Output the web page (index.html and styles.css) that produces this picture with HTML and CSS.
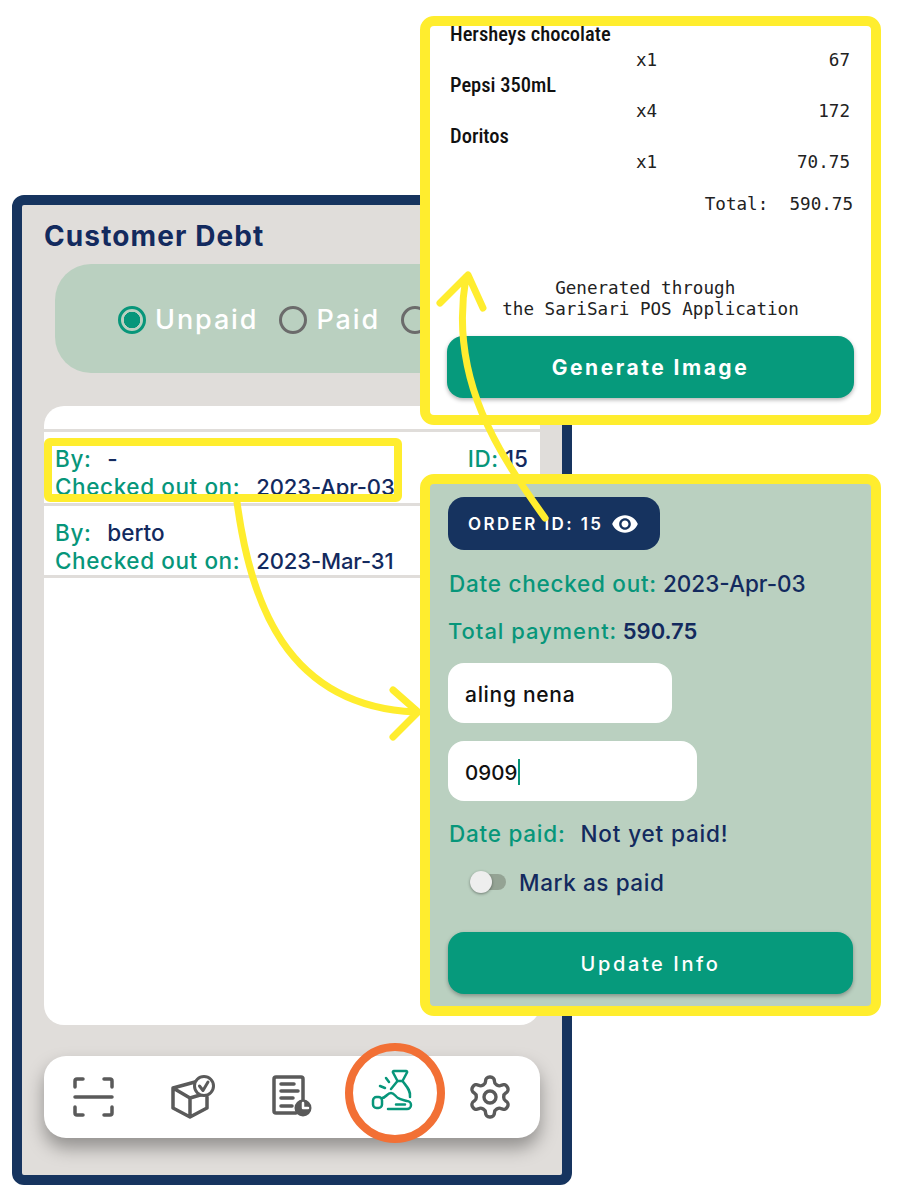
FILE: index.html
```html
<!DOCTYPE html>
<html>
<head>
  <title>Customer Debt</title>
  <link rel="stylesheet" href="styles.css">
</head>
<body>
  <div class="phone">
    <h1 class="title">Customer Debt</h1>
    <div class="filter">
      <span class="radio checked"></span><span class="radio-label">Unpaid</span>
      <span class="radio"></span><span class="radio-label">Paid</span>
      <span class="radio"></span>
    </div>
    <div class="orders">
      <div class="order">
        <div>
          <div><span class="key">By:</span><span class="val by">-</span></div>
          <div><span class="key">Checked out on:</span><span class="val date">2023-Apr-03</span></div>
        </div>
        <div><span class="key">ID:</span> <span class="val">15</span></div>
      </div>
      <div class="order">
        <div>
          <div><span class="key">By:</span><span class="val by">berto</span></div>
          <div><span class="key">Checked out on:</span><span class="val date">2023-Mar-31</span></div>
        </div>
      </div>
    </div>
    <div class="nav">
      <div class="nav-item">
        <svg class="icon" viewBox="0 0 48 48">
          <path d="M5 14V8a2 2 0 0 1 2-2h6M34 6h6a2 2 0 0 1 2 2v6M5 34v6a2 2 0 0 0 2 2h6M34 42h6a2 2 0 0 0 2-2v-6M5 24h37"/>
        </svg>
      </div>
      <div class="nav-item">
        <svg class="icon" viewBox="0 0 48 48">
          <path d="M26 9L4 15V35L21 44L38 35V24M4 15L21 25L38 20M21 25V44"/>
          <circle class="badge" cx="35" cy="13" r="9.5"/>
          <path class="thin" d="M30.5 13l3.5 4.5l5-8.5"/>
        </svg>
      </div>
      <div class="nav-item">
        <svg class="icon" viewBox="0 0 48 48">
          <path d="M28 40H8a2 2 0 0 1-2-2V6a2 2 0 0 1 2-2h25a2 2 0 0 1 2 2v21"/>
          <path d="M13 11h13M13 18h17M13 25h12M13 33h11"/>
          <circle class="solid" cx="35" cy="35" r="8.5"/>
          <path class="hand-clock" d="M35 30v5h5"/>
        </svg>
      </div>
      <div class="nav-item">
        <svg class="icon active" viewBox="0 0 48 48">
          <path d="M27 -2h12a1 1 0 0 1 1 1.5L35.500 8h-5L26 -.5a1 1 0 0 1 1-1.500z"/>
          <path d="M35.500 8C39 13 44 17 43 24M30.500 8L24 16M13 13L18 15M19 5L22 9"/>
          <path d="M15 25C19 25 20 20 24 20C27 20 28 23 31 25C34 27 37 27 40 28a4 4 0 0 1 0 8H21M29 31.500H38"/>
          <rect x="6" y="24" width="9" height="11" rx="3.500"/>
        </svg>
      </div>
      <div class="nav-item">
        <svg class="icon gear" viewBox="0 0 24 24">
          <path d="M12.22 2h-.44a2 2 0 0 0-2 2v.18a2 2 0 0 1-1 1.730l-.43.25a2 2 0 0 1-2 0l-.15-.08a2 2 0 0 0-2.730.73l-.22.38a2 2 0 0 0 .73 2.730l.15.1a2 2 0 0 1 1 1.720v.51a2 2 0 0 1-1 1.740l-.15.09a2 2 0 0 0-.73 2.730l.22.38a2 2 0 0 0 2.730.73l.15-.08a2 2 0 0 1 2 0l.43.25a2 2 0 0 1 1 1.730V20a2 2 0 0 0 2 2h.44a2 2 0 0 0 2-2v-.18a2 2 0 0 1 1-1.730l.43-.25a2 2 0 0 1 2 0l.15.08a2 2 0 0 0 2.730-.73l.22-.39a2 2 0 0 0-.73-2.730l-.15-.08a2 2 0 0 1-1-1.740v-.5a2 2 0 0 1 1-1.740l.15-.09a2 2 0 0 0 .73-2.730l-.22-.38a2 2 0 0 0-2.730-.73l-.15.08a2 2 0 0 1-2 0l-.43-.25a2 2 0 0 1-1-1.730V4a2 2 0 0 0-2-2z"/>
          <circle cx="12" cy="12" r="3"/>
        </svg>
      </div>
    </div>
  </div>

  <div class="panel receipt">
    <div class="items">
      <div class="item-name">Hersheys chocolate</div>
      <div class="item-row"><span>x1</span><span>67</span></div>
      <div class="item-name">Pepsi 350mL</div>
      <div class="item-row"><span>x4</span><span>172</span></div>
      <div class="item-name">Doritos</div>
      <div class="item-row"><span>x1</span><span>70.75</span></div>
    </div>
    <div class="total">Total:  590.75</div>
    <div class="generated">Generated through <br>the SariSari POS Application</div>
    <div class="btn">Generate Image</div>
  </div>

  <div class="panel details">
    <div class="order-badge">
      <span>ORDER ID: 15</span>
      <svg class="eye" viewBox="0 0 24 24">
        <path d="M12 4.500C7 4.500 2.730 7.610 1 12c1.730 4.390 6 7.500 11 7.500s9.270-3.110 11-7.500c-1.730-4.390-6-7.500-11-7.500zM12 17c-2.760 0-5-2.240-5-5s2.240-5 5-5 5 2.240 5 5-2.240 5-5 5zm0-8c-1.660 0-3 1.340-3 3s1.340 3 3 3 3-1.340 3-3-1.340-3-3-3z"/>
      </svg>
    </div>
    <div class="line first"><span class="key">Date checked out:</span> <span class="val">2023-Apr-03</span></div>
    <div class="line total-line"><span class="key">Total payment:</span> <span class="val">590.75</span></div>
    <div class="field name-field">aling nena</div>
    <div class="field phone-field">0909<span class="caret"></span></div>
    <div class="line paid-line"><span class="key">Date paid:</span><span class="val not-paid">Not yet paid!</span></div>
    <div class="toggle-row">
      <span class="toggle"><span class="thumb"></span></span>
      <span class="val mark-label">Mark as paid</span>
    </div>
    <div class="btn update">Update Info</div>
  </div>

  <svg class="overlay" viewBox="0 0 900 1200">
    <rect class="mark" x="48" y="442" width="350" height="56" rx="2"/>
    <path class="mark" d="M237 502C250 600 285 706 415 712M393 690L418 712L393 737"/>
    <path class="mark" d="M545 518C500 455 448 380 466 277M440 303L468 275L483 308"/>
    <circle class="ring" cx="395" cy="1093" r="46"/>
  </svg>
</body>
</html>
```

FILE: styles.css
```css
* {
  box-sizing: border-box;
  margin: 0;
  padding: 0;
}

body {
  position: relative;
  width: 900px;
  height: 1200px;
  overflow: hidden;
  background: #fff;
  font-family: Inter, "Noto Sans", sans-serif;
  color: #132a5e;
}

.key {
  color: #07967a;
  letter-spacing: 0.75px;
}

.val {
  color: #132a5e;
}

/* phone */
.phone {
  width: 560px;
  height: 990px;
  margin: 195px 0 0 12px;
  padding: 15px 22px 0;
  background: #e0ddda;
  border: 10px solid #16345f;
  border-radius: 12px;
}

.title {
  font-size: 28px;
  line-height: 32px;
  font-weight: 700;
  letter-spacing: 1.100px;
  color: #132a5e;
}

.filter {
  display: flex;
  align-items: center;
  width: 475px;
  height: 109px;
  margin: 12px 0 0 11px;
  padding: 2px 0 0 63px;
  background: #bad0c0;
  border-radius: 36px;
}

.radio {
  flex: none;
  width: 28px;
  height: 28px;
  border: 3px solid #6b6b6b;
  border-radius: 50%;
}

.radio.checked {
  border-color: #07967a;
  background: radial-gradient(circle, #07967a 0 8px, transparent 8.500px);
}

.radio-label {
  margin: 0 21px 0 9px;
  font-size: 27px;
  font-weight: 500;
  letter-spacing: 1.900px;
  color: #fff;
}

.orders {
  width: 496px;
  height: 619px;
  margin-top: 33px;
  padding-top: 23px;
  background: #fff;
  border-radius: 20px;
}

.order {
  display: flex;
  justify-content: space-between;
  height: 74px;
  padding: 13px 12px 0 11px;
  border-top: 3px solid #e0ddda;
  font-size: 22.500px;
  line-height: 28px;
  font-weight: 500;
}

.order .key {
  letter-spacing: 0.600px;
}

.order + .order {
  height: 75px;
  border-bottom: 3px solid #e0ddda;
}

.by {
  margin-left: 16px;
}

.date {
  margin-left: 16px;
  font-size: 22px;
  letter-spacing: -0.100px;
}

.nav {
  display: grid;
  grid-template-columns: repeat(5, 1fr);
  align-items: center;
  width: 496px;
  height: 82px;
  margin-top: 31px;
  background: #fff;
  border-radius: 22px;
  box-shadow: 0 10px 18px rgba(0, 0, 0, 0.35);
}

.nav-item {
  display: flex;
  justify-content: center;
}

.icon {
  width: 48px;
  height: 48px;
  overflow: visible;
  fill: none;
  stroke: #5a5a5a;
  stroke-width: 3.500;
  stroke-linecap: round;
  stroke-linejoin: round;
}

.icon.active {
  stroke: #07967a;
  stroke-width: 2.500;
}

.icon.gear {
  stroke-width: 1.700;
}

.icon .badge {
  fill: #fff;
  stroke-width: 3;
}

.icon .thin {
  stroke-width: 3;
}

.icon .solid {
  fill: #5a5a5a;
  stroke: none;
}

.icon .hand-clock {
  stroke: #fff;
  stroke-width: 2.500;
}

/* floating panels */
.panel {
  position: absolute;
  left: 420px;
  width: 461px;
  overflow: hidden;
  border: 10px solid #ffed2e;
  border-radius: 14px;
}

.receipt {
  top: 16px;
  height: 409px;
  background: #fff;
  padding: 0 17px;
  color: #111;
}

.items {
  margin-top: -4px;
  padding-left: 3px;
}

.item-name {
  font-family: Roboto, sans-serif;
  font-size: 20.500px;
  font-weight: 500;
  line-height: 25.500px;
  font-stretch: 75%;
}

.item-row {
  display: flex;
  justify-content: space-between;
  padding: 0 4px 0 186px;
  font-family: "DejaVu Sans Mono", monospace;
  font-size: 17.600px;
  line-height: 25.500px;
  color: #222;
}

.total {
  margin-top: 17px;
  padding-right: 1px;
  text-align: right;
  white-space: pre;
  font-family: "DejaVu Sans Mono", monospace;
  font-size: 17.600px;
  line-height: 25px;
  color: #222;
}

.generated {
  margin-top: 61px;
  text-align: center;
  white-space: pre;
  font-family: "DejaVu Sans Mono", monospace;
  font-size: 17.600px;
  line-height: 21px;
  color: #222;
}

.btn {
  height: 62px;
  border-radius: 16px;
  background: #069a7c;
  box-shadow: 0 2px 4px rgba(0, 0, 0, 0.3);
  color: #fff;
  font-size: 21px;
  font-weight: 700;
  line-height: 64px;
  letter-spacing: 2.500px;
  text-align: center;
}

.receipt .btn {
  margin-top: 16px;
}

.details {
  top: 474px;
  height: 542px;
  background: #bad0c0;
  padding: 13px 18px 0;
}

.order-badge {
  display: flex;
  align-items: center;
  gap: 8px;
  width: 212px;
  height: 53px;
  padding-left: 20px;
  background: #16335f;
  border-radius: 16px;
  color: #fff;
  font-size: 17px;
  font-weight: 600;
  letter-spacing: 2.400px;
}

.eye {
  width: 28px;
  height: 28px;
  fill: #fff;
}

.line {
  font-size: 22.500px;
  line-height: 28px;
  font-weight: 500;
}

.first {
  margin: 20px 0 0 1px;
}

.total-line {
  margin-top: 19px;
  font-size: 22px;
  font-weight: 600;
}

.total-line .key {
  font-weight: 500;
  letter-spacing: 0.950px;
}

.field {
  display: flex;
  align-items: center;
  height: 60px;
  padding: 2px 0 0 17px;
  background: #fff;
  border-radius: 16px;
  font-size: 20.500px;
  font-weight: 500;
  color: #111;
}

.name-field {
  width: 224px;
  margin-top: 18px;
  font-size: 21px;
  letter-spacing: 0.700px;
}

.phone-field {
  width: 249px;
  margin-top: 18px;
}

.caret {
  width: 2px;
  height: 26px;
  margin-left: 1px;
  background: #07967a;
}

.paid-line {
  margin: 19px 0 0 1px;
}

.not-paid {
  margin-left: 15px;
  letter-spacing: 0.850px;
}

.toggle-row {
  display: flex;
  align-items: center;
  gap: 13px;
  height: 28px;
  margin: 20px 0 0 22px;
  font-size: 22.500px;
  font-weight: 500;
}

.mark-label {
  letter-spacing: 0.600px;
}

.toggle {
  position: relative;
  width: 36px;
  height: 16px;
  background: #94a394;
  border-radius: 8px;
}

.thumb {
  position: absolute;
  top: -3px;
  left: 0;
  width: 22px;
  height: 22px;
  background: #eee;
  border-radius: 50%;
  box-shadow: 0 1px 3px rgba(0, 0, 0, 0.4);
}

.update {
  margin-top: 36px;
  font-size: 20px;
  font-weight: 500;
  letter-spacing: 2.600px;
}

/* annotations on top of everything */
.overlay {
  position: absolute;
  top: 0;
  left: 0;
  width: 900px;
  height: 1200px;
}

.mark {
  fill: none;
  stroke: #ffed2e;
  stroke-width: 7;
  stroke-linecap: round;
  stroke-linejoin: round;
}

rect.mark {
  stroke-width: 8;
}

.ring {
  fill: none;
  stroke: #f27035;
  stroke-width: 8;
}
```
